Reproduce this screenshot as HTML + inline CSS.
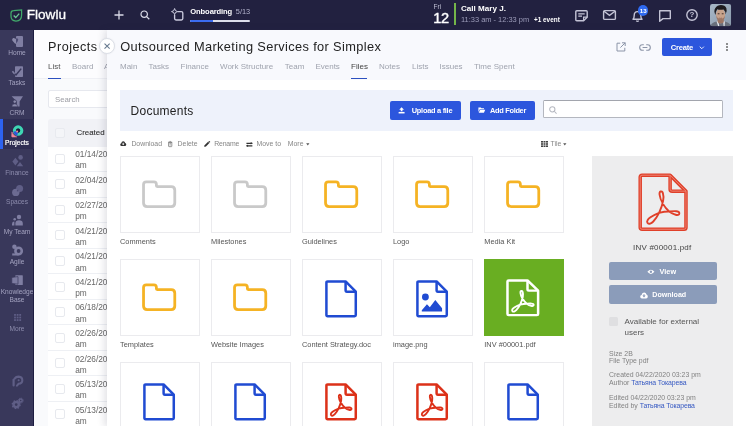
<!DOCTYPE html>
<html><head><meta charset="utf-8"><title>Flowlu</title>
<style>
*{box-sizing:border-box;margin:0;padding:0}
html,body{width:746px;height:426px;overflow:hidden;background:#fff}
body{font-family:"Liberation Sans",sans-serif;position:relative;color:#333;will-change:transform}
.a{position:absolute;white-space:nowrap;line-height:1}
svg{position:absolute;overflow:visible}
#top{left:0;top:0;width:746px;height:29.8px;background:#222140}
#side{left:0;top:29.5px;width:34.4px;height:397px;background:#39385b;border-right:1px solid #1d1c40}
#proj{left:34.4px;top:29.8px;width:73px;height:397px;background:#f9fafc}
#projhead{left:34.4px;top:29.8px;width:73px;height:49.5px;background:#fcfcfe;border-bottom:1px solid #eff0f5}
#ov{left:106.8px;top:29.8px;width:640px;height:397px;background:#fff;box-shadow:-3px 0 7px rgba(40,40,70,.13)}
#ovhead{left:106.8px;top:29.8px;width:640px;height:50px;background:#f8f9fd}
.sl{font-size:6.6px;color:#a4a3c0;width:34px;left:0;text-align:center}
.tab{font-size:8px;color:#9fa3ae;top:62.5px}
.tile{width:80px;height:77px;background:#fff;border:1px solid #ebebee}
.lab{font-size:7.4px;color:#555}
.tb{font-size:6.9px;color:#868686;top:141.1px}
.btn{background:#2c56dd;border-radius:2px;color:#fff;font-weight:bold;font-size:7.6px}
.row{left:47.6px;width:59px;height:25.55px;background:#fff;border-bottom:1px solid #eef0f4}
.cb{width:10px;height:10px;border:1px solid #e7e9ee;border-radius:2px;background:#fff}
.dt{font-size:8.3px;color:#666;left:75.2px}
.meta{font-size:6.92px;color:#828282;left:609px}
.meta b{font-weight:normal;color:#3659c2;letter-spacing:-.14px}
</style></head><body>
<div class="a" id="top"></div><div class="a" id="side"></div><div class="a" id="proj"></div><div class="a" id="projhead"></div>
<svg style="left:10px;top:9px" width="13" height="13" viewBox="0 0 13 13"><path d="M1 4.2 Q1 1.6 3.6 1.6 L11.6 1 L11.6 6 Q11.6 12 6 12 Q1 12 1 7 Z" fill="none" stroke="#41aa6b" stroke-width="1.25"/><path d="M3.7 6.6 L5.7 8.6 L9.2 4.6" fill="none" stroke="#6cc794" stroke-width="1.4"/></svg>
<div class="a " style="left:26.8px;top:8px;font-size:13.6px;color:#fff;-webkit-text-stroke:.3px #fff;letter-spacing:-.02px">Flowlu</div>
<svg style="left:114px;top:10px" width="10" height="10" viewBox="0 0 10 10"><path d="M5 0.5V9.5M0.5 5H9.5" stroke="#d9d9e6" stroke-width="1.3"/></svg>
<svg style="left:140px;top:10px" width="10" height="10" viewBox="0 0 10 10"><circle cx="4.2" cy="4.2" r="3.2" fill="none" stroke="#d9d9e6" stroke-width="1.2"/><path d="M6.6 6.6L9.3 9.3" stroke="#d9d9e6" stroke-width="1.3"/></svg>
<svg style="left:171px;top:7.6px" width="13" height="13" viewBox="0 0 13 13"><path d="M6.6 3.6H10.4Q11.8 3.6 11.8 5V10.6Q11.8 12 10.4 12H5Q3.6 12 3.6 10.6V7" fill="none" stroke="#c9c9dc" stroke-width="1.35"/><path d="M3.6 0.5L4.5 2.7L6.7 3.6L4.5 4.5L3.6 6.7L2.7 4.5L0.5 3.6L2.7 2.7Z" fill="none" stroke="#c9c9dc" stroke-width="1" stroke-linejoin="round"/></svg>
<div class="a " style="left:190.3px;top:7.8px;font-size:7.6px;font-weight:bold;color:#fff;letter-spacing:-.12px">Onboarding</div>
<div class="a " style="left:235.8px;top:7.9px;font-size:7.4px;color:#b4b4cc">5/13</div>
<div class="a" style="left:190px;top:19.8px;width:60.3px;height:2.6px;border-radius:1.3px;background:#dcdeea"></div>
<div class="a" style="left:190px;top:19.8px;width:22.8px;height:2.6px;border-radius:1.3px 0 0 1.3px;background:#3b6cf0"></div>
<div class="a " style="left:433.6px;top:3.9px;font-size:6.5px;color:#c0c0d4">Fri</div>
<div class="a " style="left:433.2px;top:10.6px;font-size:14.6px;color:#fff;-webkit-text-stroke:.4px #fff;letter-spacing:-.2px">12</div>
<div class="a" style="left:454px;top:2.5px;width:2px;height:22.5px;background:#74b54a"></div>
<div class="a " style="left:461px;top:4.6px;font-size:8.1px;font-weight:bold;color:#fff">Call Mary J.</div>
<div class="a " style="left:461px;top:16.2px;font-size:7.45px;color:#9c9cb9">11:33 am - 12:33 pm</div>
<div class="a " style="left:534px;top:16.8px;font-size:6.4px;font-weight:bold;color:#fff">+1 event</div>
<svg style="left:575px;top:9.5px" width="13" height="12" viewBox="0 0 13 12"><path d="M1.8 0.8H11.2Q12.2 0.8 12.2 1.8V7.2L8.6 10.8H1.8Q0.8 10.8 0.8 9.8V1.8Q0.8 0.8 1.8 0.8Z" fill="none" stroke="#c3c3d5" stroke-width="1.4"/><path d="M3.3 3.8H9.7M3.3 6H7" stroke="#c3c3d5" stroke-width="1.25"/><path d="M8.6 10.8V7.2H12.2" fill="none" stroke="#c3c3d5" stroke-width="1.25"/></svg>
<svg style="left:602.5px;top:10px" width="13" height="10" viewBox="0 0 13 10"><rect x="0.6" y="0.6" width="11.8" height="8.8" rx="1" fill="none" stroke="#c3c3d5" stroke-width="1.4"/><path d="M1 1.2L6.5 5.4L12 1.2" fill="none" stroke="#c3c3d5" stroke-width="1.4"/></svg>
<svg style="left:631.5px;top:10px" width="11" height="12" viewBox="0 0 11 12"><path d="M1 9.2Q2.2 8 2.2 5.4Q2.2 1.6 5.5 1.6Q8.8 1.6 8.8 5.4Q8.8 8 10 9.2Z" fill="none" stroke="#c3c3d5" stroke-width="1.4" stroke-linejoin="round"/><path d="M4.2 10.8Q5.5 11.8 6.8 10.8" fill="none" stroke="#c3c3d5" stroke-width="1.25"/></svg>
<div class="a" style="left:637.8px;top:5.2px;width:10.6px;height:10.6px;border-radius:6px;background:#2f6af0"></div>
<div class="a " style="left:639.7px;top:7.6px;font-size:6.2px;font-weight:bold;color:#fff">13</div>
<svg style="left:658.5px;top:9.5px" width="12" height="12" viewBox="0 0 12 12"><path d="M0.7 0.8H11.3V8.6H4L0.7 11.3Z" fill="none" stroke="#c3c3d5" stroke-width="1.4" stroke-linejoin="round"/></svg>
<svg style="left:686px;top:9px" width="12" height="12" viewBox="0 0 12 12"><circle cx="6" cy="6" r="5.2" fill="none" stroke="#c3c3d5" stroke-width="1.4"/></svg>
<div class="a " style="left:689.6px;top:11.3px;font-size:8px;font-weight:bold;color:#c3c3d5">?</div>
<svg style="left:709.9px;top:3.8px" width="21.2" height="22.2" viewBox="0 0 21.2 22.2"><defs><clipPath id="av"><rect width="21.2" height="22.2" rx="2.4"/></clipPath><linearGradient id="avg" x1="0" y1="0" x2="1" y2="1"><stop offset="0" stop-color="#a9b9c8"/><stop offset="1" stop-color="#8999ab"/></linearGradient></defs><g clip-path="url(#av)"><rect width="21.2" height="22.2" fill="url(#avg)"/><path d="M0.5 22.2Q1.5 18.6 6.2 17.6L10.6 19.4L15 17.6Q19.8 18.6 20.8 22.2Z" fill="#6a717d"/><path d="M6.6 17.4L8.2 22.2H9.4L8 17Z" fill="#e8ebef"/><path d="M13.2 17L13.6 22.2H14.6L14.8 17.4Z" fill="#e8ebef"/><path d="M7.6 14.5H13.8V18.2Q10.6 21 7.6 18.2Z" fill="#9c7563"/><ellipse cx="10.6" cy="10.9" rx="4.5" ry="6.2" fill="#c7a28b"/><path d="M6.2 11.5Q6.6 17 10.6 17.2Q14.6 17 15 11.5Q14 14.6 10.6 14.9Q7.2 14.6 6.2 11.5Z" fill="#8e6a5a" opacity=".75"/><path d="M5.6 11Q3.4 7.4 5.2 4.2Q7.4 0.9 11 0.9Q15 0.9 16.4 4.2Q17.4 7.4 15.6 10.6Q15.6 7 13.6 5.4Q10 6.4 7.2 5.2Q5.8 7 5.6 11Z" fill="#1d1a1d"/><ellipse cx="8.6" cy="9.7" rx="1.1" ry=".55" fill="#3a2a26"/><ellipse cx="12.7" cy="9.7" rx="1.1" ry=".55" fill="#3a2a26"/><path d="M9.2 14.1Q10.6 14.7 12 14.1" stroke="#7a4d45" stroke-width=".6" fill="none"/></g></svg>
<div class="a" style="left:0;top:118.8px;width:34px;height:30.6px;background:#2f2e53"></div><div class="a" style="left:0;top:118.8px;width:2.6px;height:30.6px;background:#2d62f0"></div>
<div class="a sl" style="top:50.2px;">Home</div>
<div class="a sl" style="top:80.1px;">Tasks</div>
<div class="a sl" style="top:109.6px;">CRM</div>
<div class="a sl" style="top:140.0px;color:#fff;-webkit-text-stroke:.2px #fff;">Projects</div>
<div class="a sl" style="top:169.8px;color:#8d8cad;">Finance</div>
<div class="a sl" style="top:199.3px;color:#8d8cad;">Spaces</div>
<div class="a sl" style="top:229.4px;">My Team</div>
<div class="a sl" style="top:258.8px;">Agile</div>
<div class="a sl" style="top:288.6px;">Knowledge</div>
<div class="a sl" style="top:296.6px;">Base</div>
<div class="a sl" style="top:326.1px;color:#8d8cad;">More</div>
<svg style="left:0;top:0" width="746" height="426" viewBox="0 0 746 426"><rect x="16" y="36" width="7" height="11" rx="1" fill="#7f7ea2"/><path d="M15.3 44 L12.3 40.6 Q11.6 38.6 13.3 38 Q14.6 37.8 15.3 39 Q16 37.8 17.3 38 Q19 38.6 18.3 40.6 Z" fill="#8a89aa"/><path d="M15.6 38.6Q17.6 37.4 18.3 39.6Q18.4 41 16 43.4V38.6Z" fill="#4b4a72"/><rect x="15" y="66.2" width="8" height="10.8" rx="0.8" fill="#7f7ea2"/><path d="M12.4 71.2L15 74.2" stroke="#7f7ea2" stroke-width="1.6" fill="none"/><path d="M14.6 73.8L16 75L21.2 68.6" stroke="#39385b" stroke-width="1.5" fill="none"/><path d="M11.6 96.2H23L19.6 101.5V106.6H16.8V101.5Z" fill="#7f7ea2"/><circle cx="14.8" cy="101.6" r="1.7" fill="#8a89aa" stroke="#39385b" stroke-width=".7"/><path d="M11.8 106.8Q11.8 103.8 14.8 103.8Q17.6 103.8 17.6 106.8Z" fill="#8a89aa" stroke="#39385b" stroke-width=".6"/><circle cx="18.1" cy="130.6" r="3.65" fill="none" stroke="#3fd6b4" stroke-width="3.2"/><circle cx="18.1" cy="130.6" r="2.05" fill="#1d1c3a"/><path d="M13.4 131.6Q14 135 17.2 135.8L18 132.8Q16.6 132.6 16.2 131.2Z" fill="#2d55d8"/><path d="M11.9 131.9Q13 135.6 16.7 136.9L12.4 137Q11.6 137 11.7 136.2Z" fill="#f0879b" stroke="#f0879b" stroke-width=".6" stroke-linejoin="round"/><circle cx="17.1" cy="131.4" r="1" fill="#f0879b"/><circle cx="20.6" cy="157.4" r="2.3" fill="#5f5e86"/><path d="M15.4 157.8L18.4 161.4L15.4 165.6L12.4 161.4Z" fill="#5f5e86"/><path d="M16.8 166.2L20 162L23.2 166.2Z" fill="#5f5e86"/><circle cx="19.6" cy="188.6" r="3.5" fill="#5f5e86"/><circle cx="15.8" cy="192.4" r="3.7" fill="#6c6b92"/><rect x="16.9" y="189.6" width="1.6" height="1.8" fill="#4c4b74"/><circle cx="19" cy="217" r="2.2" fill="#7f7ea2"/><path d="M15.4 225.6V223.4Q15.4 220.2 19 220.2Q22.8 220.2 22.8 223.4V225.6Z" fill="#7f7ea2"/><circle cx="14.7" cy="219.2" r="1.25" fill="#7f7ea2"/><path d="M12 225.6V224Q12 221.6 14.4 221.6V225.6Z" fill="#7f7ea2"/><circle cx="14.4" cy="246.7" r="2.2" fill="#7f7ea2"/><circle cx="18.6" cy="251" r="3.2" fill="none" stroke="#7f7ea2" stroke-width="2.6"/><path d="M12.2 253.4H18.6V255.5H12.2Z" fill="#7f7ea2"/><rect x="15.3" y="275.2" width="7.5" height="9.8" rx=".6" fill="#7f7ea2"/><path d="M11.8 277.4L18 276.6V284.2L11.8 283.4Z" fill="#7c7ba0" stroke="#39385b" stroke-width=".7"/><rect x="14.1" y="314.0" width="1.8" height="1.8" fill="#5f5e86"/><rect x="14.1" y="316.6" width="1.8" height="1.8" fill="#5f5e86"/><rect x="14.1" y="319.2" width="1.8" height="1.8" fill="#5f5e86"/><rect x="16.7" y="314.0" width="1.8" height="1.8" fill="#5f5e86"/><rect x="16.7" y="316.6" width="1.8" height="1.8" fill="#5f5e86"/><rect x="16.7" y="319.2" width="1.8" height="1.8" fill="#5f5e86"/><rect x="19.3" y="314.0" width="1.8" height="1.8" fill="#5f5e86"/><rect x="19.3" y="316.6" width="1.8" height="1.8" fill="#5f5e86"/><rect x="19.3" y="319.2" width="1.8" height="1.8" fill="#5f5e86"/><path d="M13.6 385.4V379.8" stroke="#5f5e86" stroke-width="2.2" fill="none" stroke-linecap="round"/><path d="M14.6 378.6Q16 376.6 18.6 376.6Q22.3 376.8 22.3 380.2Q22.3 383.6 18.6 383.8L17 385.6" stroke="#5f5e86" stroke-width="2.1" fill="none" stroke-linecap="round"/><circle cx="18.6" cy="380.2" r="1" fill="#5f5e86"/><circle cx="16.2" cy="404.6" r="2.6" fill="none" stroke="#5f5e86" stroke-width="2.4"/><circle cx="16.2" cy="404.6" r="3.9" fill="none" stroke="#5f5e86" stroke-width="1.4" stroke-dasharray="1.5 1.55"/><circle cx="20.7" cy="400.6" r="1.5" fill="none" stroke="#5f5e86" stroke-width="1.5"/><circle cx="20.7" cy="400.6" r="2.5" fill="none" stroke="#5f5e86" stroke-width="1" stroke-dasharray="1 1"/></svg>
<div class="a " style="left:48px;top:40.6px;font-size:12.6px;color:#222;letter-spacing:.52px">Projects</div>
<div class="a tab" style="left:48px;top:62.5px;color:#555">List</div>
<div class="a tab" style="left:72px;top:62.5px;">Board</div>
<div class="a tab" style="left:104px;top:62.5px;">A</div>
<div class="a" style="left:48px;top:77.8px;width:12.6px;height:1.3px;background:#2c50c0"></div>
<div class="a" style="left:48px;top:90.1px;width:70px;height:17.7px;background:#fff;border:1px solid #e6e8ee;border-radius:2px"></div>
<div class="a " style="left:55px;top:95.6px;font-size:7.8px;color:#9c9da4">Search</div>
<div class="a" style="left:47.6px;top:118.9px;width:60px;height:27.7px;background:#f1f2f6;border-radius:3px 0 0 0"></div>
<div class="a cb" style="left:54.9px;top:128.1px;background:#f4f5f8;border-color:#e8eaef"></div>
<div class="a " style="left:76.5px;top:129.2px;font-size:7.9px;color:#333;-webkit-text-stroke:.12px #333">Created</div>
<div class="a row" style="top:146.50px"></div>
<div class="a cb" style="left:54.9px;top:153.80px"></div>
<div class="a dt" style="top:150.10px">01/14/20</div>
<div class="a dt" style="top:161.30px">am</div>
<div class="a row" style="top:172.05px"></div>
<div class="a cb" style="left:54.9px;top:179.35px"></div>
<div class="a dt" style="top:175.65px">02/04/20</div>
<div class="a dt" style="top:186.85px">am</div>
<div class="a row" style="top:197.60px"></div>
<div class="a cb" style="left:54.9px;top:204.90px"></div>
<div class="a dt" style="top:201.20px">02/27/20</div>
<div class="a dt" style="top:212.40px">pm</div>
<div class="a row" style="top:223.15px"></div>
<div class="a cb" style="left:54.9px;top:230.45px"></div>
<div class="a dt" style="top:226.75px">04/21/20</div>
<div class="a dt" style="top:237.95px">am</div>
<div class="a row" style="top:248.70px"></div>
<div class="a cb" style="left:54.9px;top:256.00px"></div>
<div class="a dt" style="top:252.30px">04/21/20</div>
<div class="a dt" style="top:263.50px">am</div>
<div class="a row" style="top:274.25px"></div>
<div class="a cb" style="left:54.9px;top:281.55px"></div>
<div class="a dt" style="top:277.85px">04/21/20</div>
<div class="a dt" style="top:289.05px">pm</div>
<div class="a row" style="top:299.80px"></div>
<div class="a cb" style="left:54.9px;top:307.10px"></div>
<div class="a dt" style="top:303.40px">06/18/20</div>
<div class="a dt" style="top:314.60px">am</div>
<div class="a row" style="top:325.35px"></div>
<div class="a cb" style="left:54.9px;top:332.65px"></div>
<div class="a dt" style="top:328.95px">02/26/20</div>
<div class="a dt" style="top:340.15px">am</div>
<div class="a row" style="top:350.90px"></div>
<div class="a cb" style="left:54.9px;top:358.20px"></div>
<div class="a dt" style="top:354.50px">02/26/20</div>
<div class="a dt" style="top:365.70px">am</div>
<div class="a row" style="top:376.45px"></div>
<div class="a cb" style="left:54.9px;top:383.75px"></div>
<div class="a dt" style="top:380.05px">05/13/20</div>
<div class="a dt" style="top:391.25px">am</div>
<div class="a row" style="top:402.00px"></div>
<div class="a cb" style="left:54.9px;top:409.30px"></div>
<div class="a dt" style="top:405.60px">05/13/20</div>
<div class="a dt" style="top:416.80px">am</div>
<div class="a" id="ov"></div><div class="a" id="ovhead"></div>
<div class="a" style="left:99px;top:37.9px;width:16px;height:16.2px;border-radius:8px;background:#fff;border:1px solid #dcdfe7;box-shadow:0 0 2px rgba(0,0,0,.06)"></div>
<svg style="left:104px;top:43px" width="6.2" height="6.2" viewBox="0 0 7 7"><path d="M0.6 0.6L6.4 6.4M6.4 0.6L0.6 6.4" stroke="#66798f" stroke-width="1.2"/></svg>
<div class="a " style="left:120.3px;top:41.4px;font-size:12.8px;color:#222;letter-spacing:.36px">Outsourced Marketing Services for Simplex</div>
<div class="a tab" style="left:120px;top:62.5px;">Main</div>
<div class="a tab" style="left:148.5px;top:62.5px;">Tasks</div>
<div class="a tab" style="left:180.5px;top:62.5px;">Finance</div>
<div class="a tab" style="left:220px;top:62.5px;">Work Structure</div>
<div class="a tab" style="left:284.8px;top:62.5px;">Team</div>
<div class="a tab" style="left:315.4px;top:62.5px;">Events</div>
<div class="a tab" style="left:351px;top:62.5px;color:#444">Files</div>
<div class="a tab" style="left:379px;top:62.5px;">Notes</div>
<div class="a tab" style="left:412px;top:62.5px;">Lists</div>
<div class="a tab" style="left:439.5px;top:62.5px;">Issues</div>
<div class="a tab" style="left:474px;top:62.5px;">Time Spent</div>
<div class="a" style="left:351px;top:77.8px;width:16px;height:1.3px;background:#2c50c0"></div>
<svg style="left:616.2px;top:42px" width="10" height="10" viewBox="0 0 10 10"><path d="M4.2 1.2H1V9H8.8V5.8" fill="none" stroke="#8c95a8" stroke-width="1"/><path d="M6 0.8H9.2V4M9.2 0.8L4.4 5.6" fill="none" stroke="#8c95a8" stroke-width="1"/></svg>
<svg style="left:639px;top:44px" width="12" height="7" viewBox="0 0 12 7"><path d="M4.8 0.7H3.4Q0.7 0.7 0.7 3.5Q0.7 6.3 3.4 6.3H4.8M7.2 0.7H8.6Q11.3 0.7 11.3 3.5Q11.3 6.3 8.6 6.3H7.2M3.6 3.5H8.4" fill="none" stroke="#8c95a8" stroke-width="1.1"/></svg>
<div class="a btn" style="left:662px;top:37.6px;width:49.7px;height:18.4px;border-radius:2px"></div>
<div class="a " style="left:670.8px;top:44px;font-size:7.6px;font-weight:bold;color:#fff;letter-spacing:-.22px">Create</div>
<svg style="left:698.8px;top:45.9px" width="5.6" height="3.6" viewBox="0 0 6 4"><path d="M0.7 0.7L3 3L5.3 0.7" fill="none" stroke="#fff" stroke-width="1"/></svg>
<div class="a" style="left:726px;top:43.0px;width:2px;height:2px;border-radius:1px;background:#6a6a6a"></div>
<div class="a" style="left:726px;top:46.0px;width:2px;height:2px;border-radius:1px;background:#6a6a6a"></div>
<div class="a" style="left:726px;top:49.0px;width:2px;height:2px;border-radius:1px;background:#6a6a6a"></div>
<div class="a" style="left:120px;top:90px;width:612.7px;height:40.6px;background:#eef2fb"></div>
<div class="a " style="left:130.6px;top:104.6px;font-size:12px;color:#222;letter-spacing:.25px">Documents</div>
<div class="a btn" style="left:390px;top:101px;width:71px;height:18.5px"></div>
<div class="a " style="left:411.8px;top:107.3px;font-size:7.4px;font-weight:bold;color:#fff;letter-spacing:-.27px">Upload a file</div>
<svg style="left:398.2px;top:106.6px" width="7.2" height="6.8" viewBox="0 0 8 8"><path d="M4 0.3L6.8 3.2H5V5H3V3.2H1.2Z" fill="#fff"/><path d="M0.5 5.8H7.5V7.6H0.5Z" fill="#fff"/></svg>
<div class="a btn" style="left:470px;top:101px;width:64.8px;height:18.5px"></div>
<div class="a " style="left:490px;top:107.3px;font-size:7.4px;font-weight:bold;color:#fff;letter-spacing:-.3px">Add Folder</div>
<svg style="left:478px;top:106.6px" width="7.4" height="6.2" viewBox="0 0 8 7"><path d="M0.3 0.6H3L3.8 1.5H6.6V2.5H1.8L0.3 5.6Z" fill="#fff"/><path d="M2.2 3.1H8L6.5 6.4H0.6Z" fill="#fff"/></svg>
<div class="a" style="left:543.2px;top:100.4px;width:179.6px;height:17.9px;background:#fff;border:1px solid #b4b7bf;border-top-color:#a2a5ad;border-radius:1.5px"></div>
<svg style="left:548.6px;top:106.2px" width="8" height="8" viewBox="0 0 7 7"><circle cx="2.9" cy="2.9" r="2.3" fill="none" stroke="#b5b8c0" stroke-width="0.9"/><path d="M4.6 4.6L6.6 6.6" stroke="#b5b8c0" stroke-width="0.9"/></svg>
<svg style="left:120.2px;top:141.2px" width="6.4" height="5.4" viewBox="0 0 7 6"><path d="M1.7 5.6Q0.2 5.6 0.2 4.1Q0.2 2.9 1.4 2.6Q1.6 0.4 3.6 0.4Q5.3 0.4 5.7 2.1Q6.9 2.3 6.9 3.8Q6.9 5.6 5.4 5.6Z" fill="#333"/><path d="M3.5 4.8L2 3.1H3V1.9H4V3.1H5Z" fill="#f8f9fb"/></svg>
<div class="a tb" style="left:131.4px;top:141.1px;">Download</div>
<svg style="left:168.2px;top:141.2px" width="4.4" height="6" viewBox="0 0 5 7"><path d="M0.6 1.6H4.4V6Q4.4 6.6 3.8 6.6H1.2Q0.6 6.6 0.6 6Z" fill="none" stroke="#666" stroke-width="0.8"/><path d="M0.2 1.4H4.8M1.7 0.5H3.3M1.6 3H3.4M1.6 4.6H3.4" stroke="#666" stroke-width="0.7"/></svg>
<div class="a tb" style="left:177.6px;top:141.1px;">Delete</div>
<svg style="left:204px;top:141.2px" width="6.2" height="6.2" viewBox="0 0 7 7"><path d="M0.3 6.7L0.7 4.8L4.6 0.9L6.1 2.4L2.2 6.3Z" fill="#333"/><path d="M5 0.5L5.6 0Q6 -0.2 6.4 0.2L6.8 0.6Q7.2 1 6.9 1.4L6.4 2Z" fill="#333"/></svg>
<div class="a tb" style="left:214.3px;top:141.1px;letter-spacing:-.2px">Rename</div>
<svg style="left:245.6px;top:141.8px" width="6.8" height="5.4" viewBox="0 0 7 6"><path d="M0.2 0.8H6.8V2.1H0.2ZM0.2 3.6H6.8V4.9H0.2Z" fill="#333"/><path d="M5 0L7 1.45L5 2.9ZM2 2.8L0 4.25L2 5.7Z" fill="#333"/></svg>
<div class="a tb" style="left:256.5px;top:141.1px;">Move to</div>
<div class="a tb" style="left:287.8px;top:141.1px;">More</div>
<svg style="left:305.8px;top:143.1px" width="3.6" height="2.8" viewBox="0 0 4 3"><path d="M0.2 0.3H3.8L2 2.6Z" fill="#555"/></svg>
<svg style="left:541px;top:141.3px" width="7" height="6" viewBox="0 0 7 6"><rect x="0.0" y="0.0" width="2" height="1.6" fill="#444"/><rect x="0.0" y="2.2" width="2" height="1.6" fill="#444"/><rect x="0.0" y="4.4" width="2" height="1.6" fill="#444"/><rect x="2.5" y="0.0" width="2" height="1.6" fill="#444"/><rect x="2.5" y="2.2" width="2" height="1.6" fill="#444"/><rect x="2.5" y="4.4" width="2" height="1.6" fill="#444"/><rect x="5.0" y="0.0" width="2" height="1.6" fill="#444"/><rect x="5.0" y="2.2" width="2" height="1.6" fill="#444"/><rect x="5.0" y="4.4" width="2" height="1.6" fill="#444"/></svg>
<div class="a tb" style="left:550.5px;top:141.1px;">Tile</div>
<svg style="left:563.3px;top:143.1px" width="3.6" height="2.8" viewBox="0 0 4 3"><path d="M0.2 0.3H3.8L2 2.6Z" fill="#555"/></svg>
<div class="a tile" style="left:120px;top:156.3px"></div>
<svg style="left:141.9px;top:179.8px" width="34.5" height="28.4" viewBox="0 0 36 29"><path d="M4.5 1.6H12.5Q15 1.6 15 4.1V5.8Q15 6.6 15.8 6.6H30.5Q34.2 6.6 34.2 10.3V23.7Q34.2 27.4 30.5 27.4H5.3Q1.6 27.4 1.6 23.7V4.5Q1.6 1.6 4.5 1.6Z" fill="none" stroke="#c9c9c9" stroke-width="2.9" stroke-linejoin="round"/></svg>
<div class="a lab" style="left:120px;top:238.10000000000002px;">Comments</div>
<div class="a tile" style="left:211px;top:156.3px"></div>
<svg style="left:232.9px;top:179.8px" width="34.5" height="28.4" viewBox="0 0 36 29"><path d="M4.5 1.6H12.5Q15 1.6 15 4.1V5.8Q15 6.6 15.8 6.6H30.5Q34.2 6.6 34.2 10.3V23.7Q34.2 27.4 30.5 27.4H5.3Q1.6 27.4 1.6 23.7V4.5Q1.6 1.6 4.5 1.6Z" fill="none" stroke="#c9c9c9" stroke-width="2.9" stroke-linejoin="round"/></svg>
<div class="a lab" style="left:211px;top:238.10000000000002px;">Milestones</div>
<div class="a tile" style="left:302px;top:156.3px"></div>
<svg style="left:323.9px;top:179.8px" width="34.5" height="28.4" viewBox="0 0 36 29"><path d="M4.5 1.6H12.5Q15 1.6 15 4.1V5.8Q15 6.6 15.8 6.6H30.5Q34.2 6.6 34.2 10.3V23.7Q34.2 27.4 30.5 27.4H5.3Q1.6 27.4 1.6 23.7V4.5Q1.6 1.6 4.5 1.6Z" fill="none" stroke="#f5b324" stroke-width="2.9" stroke-linejoin="round"/></svg>
<div class="a lab" style="left:302px;top:238.10000000000002px;">Guidelines</div>
<div class="a tile" style="left:393px;top:156.3px"></div>
<svg style="left:414.9px;top:179.8px" width="34.5" height="28.4" viewBox="0 0 36 29"><path d="M4.5 1.6H12.5Q15 1.6 15 4.1V5.8Q15 6.6 15.8 6.6H30.5Q34.2 6.6 34.2 10.3V23.7Q34.2 27.4 30.5 27.4H5.3Q1.6 27.4 1.6 23.7V4.5Q1.6 1.6 4.5 1.6Z" fill="none" stroke="#f5b324" stroke-width="2.9" stroke-linejoin="round"/></svg>
<div class="a lab" style="left:393px;top:238.10000000000002px;">Logo</div>
<div class="a tile" style="left:484.3px;top:156.3px"></div>
<svg style="left:506.2px;top:179.8px" width="34.5" height="28.4" viewBox="0 0 36 29"><path d="M4.5 1.6H12.5Q15 1.6 15 4.1V5.8Q15 6.6 15.8 6.6H30.5Q34.2 6.6 34.2 10.3V23.7Q34.2 27.4 30.5 27.4H5.3Q1.6 27.4 1.6 23.7V4.5Q1.6 1.6 4.5 1.6Z" fill="none" stroke="#f5b324" stroke-width="2.9" stroke-linejoin="round"/></svg>
<div class="a lab" style="left:484.3px;top:238.10000000000002px;">Media Kit</div>
<div class="a tile" style="left:120px;top:259.3px"></div>
<svg style="left:141.9px;top:282.8px" width="34.5" height="28.4" viewBox="0 0 36 29"><path d="M4.5 1.6H12.5Q15 1.6 15 4.1V5.8Q15 6.6 15.8 6.6H30.5Q34.2 6.6 34.2 10.3V23.7Q34.2 27.4 30.5 27.4H5.3Q1.6 27.4 1.6 23.7V4.5Q1.6 1.6 4.5 1.6Z" fill="none" stroke="#f5b324" stroke-width="2.9" stroke-linejoin="round"/></svg>
<div class="a lab" style="left:120px;top:341.1px;">Templates</div>
<div class="a tile" style="left:211px;top:259.3px"></div>
<svg style="left:232.9px;top:282.8px" width="34.5" height="28.4" viewBox="0 0 36 29"><path d="M4.5 1.6H12.5Q15 1.6 15 4.1V5.8Q15 6.6 15.8 6.6H30.5Q34.2 6.6 34.2 10.3V23.7Q34.2 27.4 30.5 27.4H5.3Q1.6 27.4 1.6 23.7V4.5Q1.6 1.6 4.5 1.6Z" fill="none" stroke="#f5b324" stroke-width="2.9" stroke-linejoin="round"/></svg>
<div class="a lab" style="left:211px;top:341.1px;">Website Images</div>
<div class="a tile" style="left:302px;top:259.3px"></div>
<svg style="left:325px;top:279.6px" width="32.2" height="37.6" viewBox="0 0 50 58" preserveAspectRatio="none"><path d="M4 2.2H32L47.8 18V54Q47.8 55.8 46 55.8H4Q2.2 55.8 2.2 54V4Q2.2 2.2 4 2.2Z" fill="none" stroke="#204bd2" stroke-width="3.88" stroke-linejoin="round"/><path d="M32 2.2V16Q32 18 34 18H47.8" fill="none" stroke="#204bd2" stroke-width="3.88" stroke-linejoin="round"/></svg>
<div class="a lab" style="left:302px;top:341.1px;">Content Strategy.doc</div>
<div class="a tile" style="left:393px;top:259.3px"></div>
<svg style="left:416px;top:279.6px" width="32.2" height="37.6" viewBox="0 0 50 58" preserveAspectRatio="none"><path d="M4 2.2H32L47.8 18V54Q47.8 55.8 46 55.8H4Q2.2 55.8 2.2 54V4Q2.2 2.2 4 2.2Z" fill="none" stroke="#204bd2" stroke-width="3.88" stroke-linejoin="round"/><path d="M32 2.2V16Q32 18 34 18H47.8" fill="none" stroke="#204bd2" stroke-width="3.88" stroke-linejoin="round"/><circle cx="14.6" cy="26.2" r="5.3" fill="#204bd2"/><path d="M9 48.5V46.5L17 37.5L21.5 42L30 31L40.5 43.5V48.5Z" fill="#204bd2"/></svg>
<div class="a lab" style="left:393px;top:341.1px;">image.png</div>
<div class="a tile" style="left:484.3px;top:259.3px;background:#69ae22;border-color:#69ae22"></div>
<svg style="left:505.7px;top:279.3px" width="33.6" height="37.6" viewBox="0 0 50 58" preserveAspectRatio="none"><path d="M4 2.2H32L47.8 18V54Q47.8 55.8 46 55.8H4Q2.2 55.8 2.2 54V4Q2.2 2.2 4 2.2Z" fill="none" stroke="#fff" stroke-width="3.72" stroke-linejoin="round"/><path d="M32 2.2V16Q32 18 34 18H47.8" fill="none" stroke="#fff" stroke-width="3.72" stroke-linejoin="round"/><path d="M9.5 49.5C7 46 16 41.5 21 39.5C24 33 26.5 25 24.8 20C23.8 17 21 18 21.5 21.5C22.2 27.5 27 34.5 31 38.2C35 37.8 41.5 37 41.2 40.2C41 43 35 41.2 31 38.2C27.5 38 24 38.8 21 39.5C18 45.5 12.5 53 9.5 49.5Z" fill="none" stroke="#fff" stroke-width="2.83" stroke-linejoin="round"/></svg>
<div class="a lab" style="left:484.3px;top:341.1px;">INV #00001.pdf</div>
<div class="a tile" style="left:120px;top:362.3px"></div>
<svg style="left:143px;top:382.6px" width="32.2" height="37.6" viewBox="0 0 50 58" preserveAspectRatio="none"><path d="M4 2.2H32L47.8 18V54Q47.8 55.8 46 55.8H4Q2.2 55.8 2.2 54V4Q2.2 2.2 4 2.2Z" fill="none" stroke="#204bd2" stroke-width="3.88" stroke-linejoin="round"/><path d="M32 2.2V16Q32 18 34 18H47.8" fill="none" stroke="#204bd2" stroke-width="3.88" stroke-linejoin="round"/></svg>
<div class="a tile" style="left:211px;top:362.3px"></div>
<svg style="left:234px;top:382.6px" width="32.2" height="37.6" viewBox="0 0 50 58" preserveAspectRatio="none"><path d="M4 2.2H32L47.8 18V54Q47.8 55.8 46 55.8H4Q2.2 55.8 2.2 54V4Q2.2 2.2 4 2.2Z" fill="none" stroke="#204bd2" stroke-width="3.88" stroke-linejoin="round"/><path d="M32 2.2V16Q32 18 34 18H47.8" fill="none" stroke="#204bd2" stroke-width="3.88" stroke-linejoin="round"/></svg>
<div class="a tile" style="left:302px;top:362.3px"></div>
<svg style="left:325px;top:382.6px" width="32.2" height="37.6" viewBox="0 0 50 58" preserveAspectRatio="none"><path d="M4 2.2H32L47.8 18V54Q47.8 55.8 46 55.8H4Q2.2 55.8 2.2 54V4Q2.2 2.2 4 2.2Z" fill="none" stroke="#dc3119" stroke-width="3.88" stroke-linejoin="round"/><path d="M32 2.2V16Q32 18 34 18H47.8" fill="none" stroke="#dc3119" stroke-width="3.88" stroke-linejoin="round"/><path d="M9.5 49.5C7 46 16 41.5 21 39.5C24 33 26.5 25 24.8 20C23.8 17 21 18 21.5 21.5C22.2 27.5 27 34.5 31 38.2C35 37.8 41.5 37 41.2 40.2C41 43 35 41.2 31 38.2C27.5 38 24 38.8 21 39.5C18 45.5 12.5 53 9.5 49.5Z" fill="none" stroke="#dc3119" stroke-width="2.95" stroke-linejoin="round"/></svg>
<div class="a tile" style="left:393px;top:362.3px"></div>
<svg style="left:416px;top:382.6px" width="32.2" height="37.6" viewBox="0 0 50 58" preserveAspectRatio="none"><path d="M4 2.2H32L47.8 18V54Q47.8 55.8 46 55.8H4Q2.2 55.8 2.2 54V4Q2.2 2.2 4 2.2Z" fill="none" stroke="#dc3119" stroke-width="3.88" stroke-linejoin="round"/><path d="M32 2.2V16Q32 18 34 18H47.8" fill="none" stroke="#dc3119" stroke-width="3.88" stroke-linejoin="round"/><path d="M9.5 49.5C7 46 16 41.5 21 39.5C24 33 26.5 25 24.8 20C23.8 17 21 18 21.5 21.5C22.2 27.5 27 34.5 31 38.2C35 37.8 41.5 37 41.2 40.2C41 43 35 41.2 31 38.2C27.5 38 24 38.8 21 39.5C18 45.5 12.5 53 9.5 49.5Z" fill="none" stroke="#dc3119" stroke-width="2.95" stroke-linejoin="round"/></svg>
<div class="a tile" style="left:484.3px;top:362.3px"></div>
<svg style="left:507.3px;top:382.6px" width="32.2" height="37.6" viewBox="0 0 50 58" preserveAspectRatio="none"><path d="M4 2.2H32L47.8 18V54Q47.8 55.8 46 55.8H4Q2.2 55.8 2.2 54V4Q2.2 2.2 4 2.2Z" fill="none" stroke="#204bd2" stroke-width="3.88" stroke-linejoin="round"/><path d="M32 2.2V16Q32 18 34 18H47.8" fill="none" stroke="#204bd2" stroke-width="3.88" stroke-linejoin="round"/></svg>
<div class="a" style="left:592.2px;top:156.3px;width:140.4px;height:270px;background:#ededee"></div>
<svg style="left:637.6px;top:173px" width="50.2" height="58.5" viewBox="0 0 50 58" preserveAspectRatio="none"><path d="M4 2.2H32L47.8 18V54Q47.8 55.8 46 55.8H4Q2.2 55.8 2.2 54V4Q2.2 2.2 4 2.2Z" fill="none" stroke="#e0402a" stroke-width="3.49" stroke-linejoin="round"/><path d="M32 2.2V16Q32 18 34 18H47.8" fill="none" stroke="#e0402a" stroke-width="3.49" stroke-linejoin="round"/><path d="M4 2.2H32L47.8 18V54Q47.8 55.8 46 55.8H4Q2.2 55.8 2.2 54V4Q2.2 2.2 4 2.2ZM32 2.2V16Q32 18 34 18H47.8" fill="none" stroke="#ee8a7a" stroke-width="0.9" stroke-linejoin="round"/><path d="M9.5 49.5C7 46 16 41.5 21 39.5C24 33 26.5 25 24.8 20C23.8 17 21 18 21.5 21.5C22.2 27.5 27 34.5 31 38.2C35 37.8 41.5 37 41.2 40.2C41 43 35 41.2 31 38.2C27.5 38 24 38.8 21 39.5C18 45.5 12.5 53 9.5 49.5Z" fill="none" stroke="#e0402a" stroke-width="1.89" stroke-linejoin="round"/></svg>
<div class="a" style="left:592.5px;top:244px;width:139.5px;text-align:center;font-size:8px;letter-spacing:.2px;color:#444">INV #00001.pdf</div>
<div class="a" style="left:609px;top:261.5px;width:107.6px;height:18.9px;border-radius:2px;background:#8b9cba"></div>
<div class="a" style="left:609px;top:285.1px;width:107.6px;height:18.9px;border-radius:2px;background:#8b9cba"></div>
<div class="a " style="left:659.6px;top:267.7px;font-size:7.3px;font-weight:bold;color:#fff">View</div>
<svg style="left:647.4px;top:268.6px" width="7.8" height="5.6" viewBox="0 0 8 6"><path d="M0.2 3Q4 -1.6 7.8 3Q4 7.6 0.2 3Z" fill="#fff"/><circle cx="4" cy="3" r="1.3" fill="#8b9bba"/></svg>
<div class="a " style="left:652.3px;top:291.9px;font-size:7.1px;font-weight:bold;color:#fff">Download</div>
<svg style="left:640px;top:291.5px" width="8" height="7" viewBox="0 0 8 7"><path d="M2 6.4Q0.2 6.4 0.2 4.7Q0.2 3.3 1.6 3Q1.8 0.5 4.1 0.5Q6 0.5 6.5 2.4Q7.8 2.7 7.8 4.4Q7.8 6.4 6.1 6.4Z" fill="#fff"/><path d="M4 5.5L2.3 3.6H3.4V2.2H4.6V3.6H5.7Z" fill="#8b9bba"/></svg>
<div class="a" style="left:609px;top:317px;width:9px;height:9px;border-radius:1.5px;background:#dfdfe1"></div>
<div class="a " style="left:624.5px;top:317.8px;font-size:8px;color:#555">Available for external</div>
<div class="a " style="left:624.5px;top:328.7px;font-size:8px;color:#555">users</div>
<div class="a meta" style="left:609px;top:350.6px;">Size 2B</div>
<div class="a meta" style="left:609px;top:358.3px;">File Type pdf</div>
<div class="a meta" style="left:609px;top:372.4px;">Created 04/22/2020 03:23 pm</div>
<div class="a meta" style="left:609px;top:380.2px;">Author <b>Татьяна Токарева</b></div>
<div class="a meta" style="left:609px;top:395.2px;">Edited 04/22/2020 03:23 pm</div>
<div class="a meta" style="left:609px;top:402.9px;">Edited by <b>Татьяна Токарева</b></div>
</body></html>
